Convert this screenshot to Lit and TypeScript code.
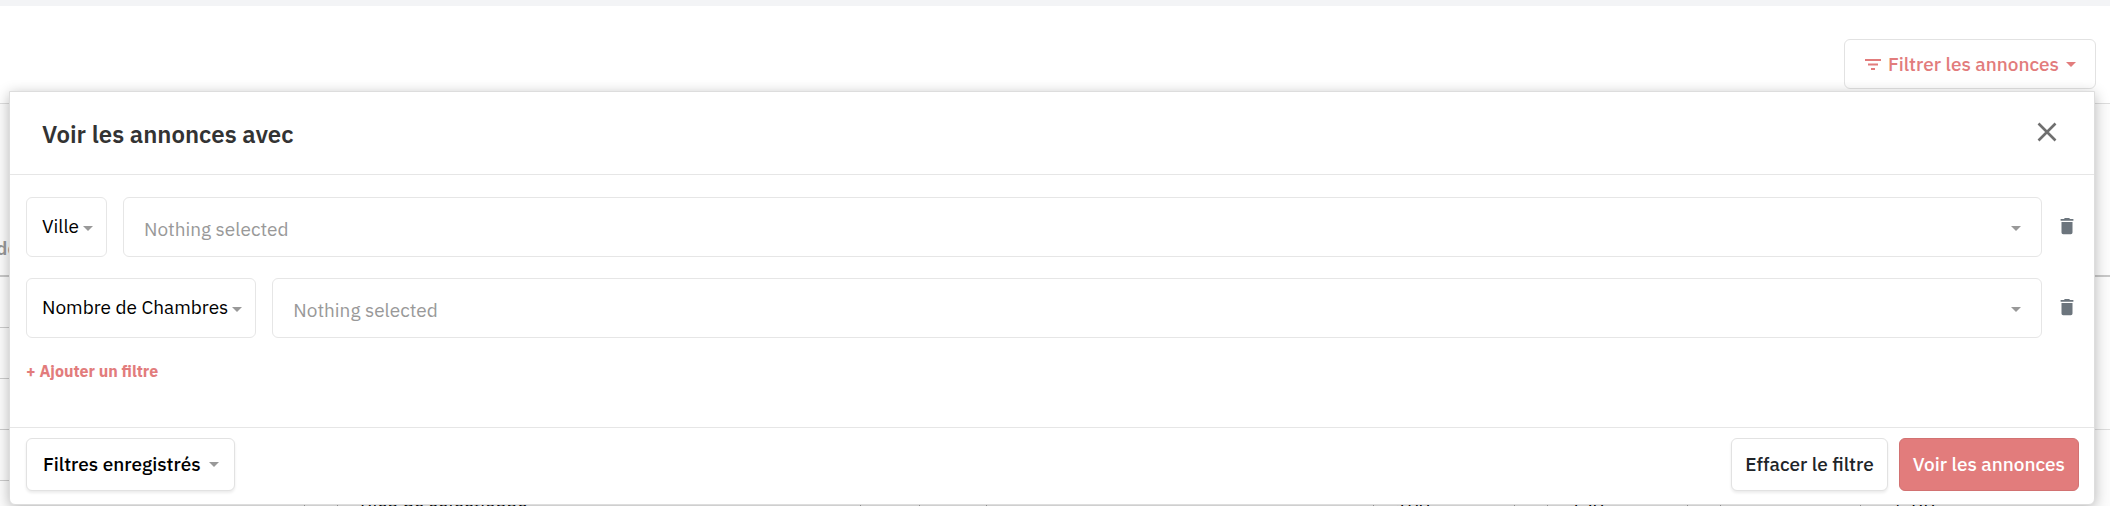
import { LitElement, html, css } from "lit";
import { customElement, property, state } from "lit/decorators.js";
import { styleMap } from "lit/directives/style-map.js";

interface Filter {
  id: number;
  name: string;
}

const FIELDS = ["Ville", "Nombre de Chambres"];

const COLUMNS = [305, 33, 523, 59, 67, 387, 141, 33, 140, 33, 140];

const ROWS: string[][] = [
  [],
  [],
  [],
  [],
  ["", "", "Bien de selectionne", "", "", "", "100", "", "120", "", "", "5 BR"],
];

const caret = html`<svg class="caret" viewBox="0 0 10 5" width="10" height="5" aria-hidden="true">
  <path d="M0 0h10L5 5z" fill="currentColor" />
</svg>`;

@customElement("filter-row")
class FilterRow extends LitElement {
  @property({ type: Object }) filter!: Filter;

  static styles = css`
    :host {
      display: flex;
      align-items: stretch;
      gap: 16px;
    }
    .field {
      position: relative;
      display: flex;
      height: 60px;
      color: #999;
    }
    .value {
      flex: 1;
    }
    select {
      appearance: none;
      field-sizing: content;
      box-sizing: border-box;
      margin: 0;
      padding: 0 27px 2px 15px;
      border: 1px solid #e6e6e6;
      border-radius: 6px;
      background: #fff;
      color: #000;
      font: inherit;
      cursor: pointer;
    }
    .value select {
      width: 100%;
      padding: 4px 40px 0 20px;
      color: #999;
    }
    .caret {
      position: absolute;
      right: 14px;
      top: 29px;
      pointer-events: none;
    }
    .value .caret {
      right: 21px;
    }
    .remove {
      display: flex;
      align-items: center;
      justify-content: flex-start;
      width: 21px;
      padding: 0 0 2px;
      border: 0;
      background: none;
      color: #6c757d;
      cursor: pointer;
    }
  `;

  render() {
    return html`
      <div class="field">
        <select aria-label="Champ">
          ${FIELDS.map((f) => html`<option ?selected=${f === this.filter.name}>${f}</option>`)}
        </select>
        ${caret}
      </div>
      <div class="field value">
        <select aria-label=${this.filter.name}>
          <option>Nothing selected</option>
        </select>
        ${caret}
      </div>
      <button
        class="remove"
        aria-label="Supprimer"
        @click=${() => this.dispatchEvent(new CustomEvent("remove"))}
      >
        <svg viewBox="1 0 18 18" width="18" height="18" aria-hidden="true">
          <path
            fill="currentColor"
            d="M4.500 5h11v10.500a1.700 1.700 0 0 1-1.700 1.700H6.200a1.700 1.700 0 0 1-1.700-1.700zM3.600 2h3.300l1-1h4.200l1 1h3.300v1.800H3.600z"
          />
        </svg>
      </button>
    `;
  }
}

@customElement("app-root")
class AppRoot extends LitElement {
  @state() filters: Filter[] = [
    { id: 1, name: "Ville" },
    { id: 2, name: "Nombre de Chambres" },
  ];

  static styles = css`
    :host {
      display: block;
      position: relative;
      height: 100vh;
      overflow: hidden;
      box-sizing: border-box;
      border-top: 6px solid #f3f4f6;
      background: #fff;
      color: #000;
      font: 400 19px/28px "IBM Plex Sans", Roboto, sans-serif;
    }
    button {
      display: flex;
      align-items: center;
      box-sizing: border-box;
      margin: 0;
      font: inherit;
      cursor: pointer;
    }
    .toolbar {
      display: flex;
      justify-content: flex-end;
      height: 98px;
      box-sizing: border-box;
      padding: 33px 14px 14px;
      border-bottom: 1px solid #ddd;
    }
    .toggle {
      height: 50px;
      gap: 7px;
      padding: 0 19px 0 20px;
      border: 1px solid #e2e2e2;
      border-radius: 6px;
      background: #fff;
      color: #e27c7c;
      font-weight: 500;
    }
    .listing {
      width: 100%;
      table-layout: fixed;
      border-spacing: 0;
      background: #fcfcfc;
    }
    .listing th {
      height: 173px;
      box-sizing: border-box;
      padding: 0 0 13px;
      border-bottom: 2px solid #c8c8c8;
      color: #999;
      font-weight: 600;
      text-align: left;
      text-indent: -4px;
      vertical-align: bottom;
    }
    .listing td {
      height: 51px;
      box-sizing: border-box;
      padding: 12px 0 0 22px;
      border-right: 1px solid #aaa;
      border-bottom: 1px solid #ccc;
      vertical-align: top;
      white-space: nowrap;
    }
    .listing td:last-child {
      padding-left: 34px;
      border-right: 0;
      border-bottom-color: transparent;
    }
    .listing tr:nth-child(3) td:last-child {
      border-bottom-color: #ddd;
    }
    .panel {
      position: absolute;
      top: 85px;
      left: 9px;
      right: 15px;
      border: 1px solid #ddd;
      border-radius: 0 0 6px 6px;
      background: #fff;
      box-shadow: 0 3px 14px rgba(0, 0, 0, 0.28);
    }
    .head {
      display: flex;
      align-items: center;
      justify-content: space-between;
      height: 82px;
      padding: 0 37px 0 32px;
      border-bottom: 1px solid #e6e6e6;
    }
    h2 {
      margin: 0;
      padding-top: 2px;
      color: #333;
      font-size: 24px;
      font-weight: 600;
    }
    .close {
      padding: 0 0 2px;
      border: 0;
      background: none;
      color: #6f6f6f;
    }
    .body {
      display: flex;
      flex-direction: column;
      gap: 21px;
      padding: 22px 15px 44px 16px;
    }
    .add {
      align-self: flex-start;
      padding: 0;
      border: 0;
      background: none;
      color: #e27c7c;
      font-size: 16px;
      font-weight: 700;
      line-height: 24px;
    }
    .foot {
      display: flex;
      gap: 11px;
      padding: 10px 15px 13px 16px;
      border-top: 1px solid #e6e6e6;
    }
    .btn {
      height: 53px;
      padding: 0 13px 1px;
      border: 1px solid #e2e2e2;
      border-radius: 6px;
      background: #fff;
      color: #212529;
      font-weight: 500;
      box-shadow: 0 2px 3px rgba(0, 0, 0, 0.08);
    }
    .saved {
      gap: 8px;
      margin-right: auto;
      padding: 0 15px 1px 16px;
      color: #000;
    }
    .primary {
      border-color: #d27272;
      background: #e27c7c;
      color: #fff;
      box-shadow: none;
    }
    .btn .caret {
      color: #999;
    }
  `;

  private remove(id: number) {
    this.filters = this.filters.filter((f) => f.id !== id);
  }

  private add() {
    this.filters = [...this.filters, { id: Date.now(), name: FIELDS[0] }];
  }

  render() {
    const cells = Array.from({ length: COLUMNS.length + 1 }, (_, i) => i);
    return html`
      <div class="toolbar">
        <button class="toggle" aria-expanded="true">
          <svg viewBox="0 0 16 11" width="16" height="11" aria-hidden="true">
            <path d="M0 0h16v2H0zM3 4.600h10v1.800H3zM6 9h4v2H6z" fill="currentColor" />
          </svg>
          Filtrer les annonces ${caret}
        </button>
      </div>
      <table class="listing">
        <colgroup>
          ${COLUMNS.map((w) => html`<col style=${styleMap({ width: `${w}px` })} />`)}
          <col />
        </colgroup>
        <thead>
          <tr>
            ${cells.map((i) => html`<th>${i === 0 ? "de" : ""}</th>`)}
          </tr>
        </thead>
        <tbody>
          ${ROWS.map((row) => html`<tr>${cells.map((i) => html`<td>${row[i] ?? ""}</td>`)}</tr>`)}
        </tbody>
      </table>
      <section class="panel" aria-labelledby="title">
        <header class="head">
          <h2 id="title">Voir les annonces avec</h2>
          <button class="close" aria-label="Fermer">
            <svg viewBox="0 0 20 20" width="20" height="20" aria-hidden="true">
              <path d="M1.500 1.500l17 17M18.500 1.500l-17 17" stroke="currentColor" stroke-width="2.600" />
            </svg>
          </button>
        </header>
        <div class="body">
          ${this.filters.map(
            (f) => html`<filter-row .filter=${f} @remove=${() => this.remove(f.id)}></filter-row>`
          )}
          <button class="add" @click=${this.add}>+ Ajouter un filtre</button>
        </div>
        <footer class="foot">
          <button class="btn saved">Filtres enregistrés ${caret}</button>
          <button class="btn">Effacer le filtre</button>
          <button class="btn primary">Voir les annonces</button>
        </footer>
      </section>
    `;
  }
}
